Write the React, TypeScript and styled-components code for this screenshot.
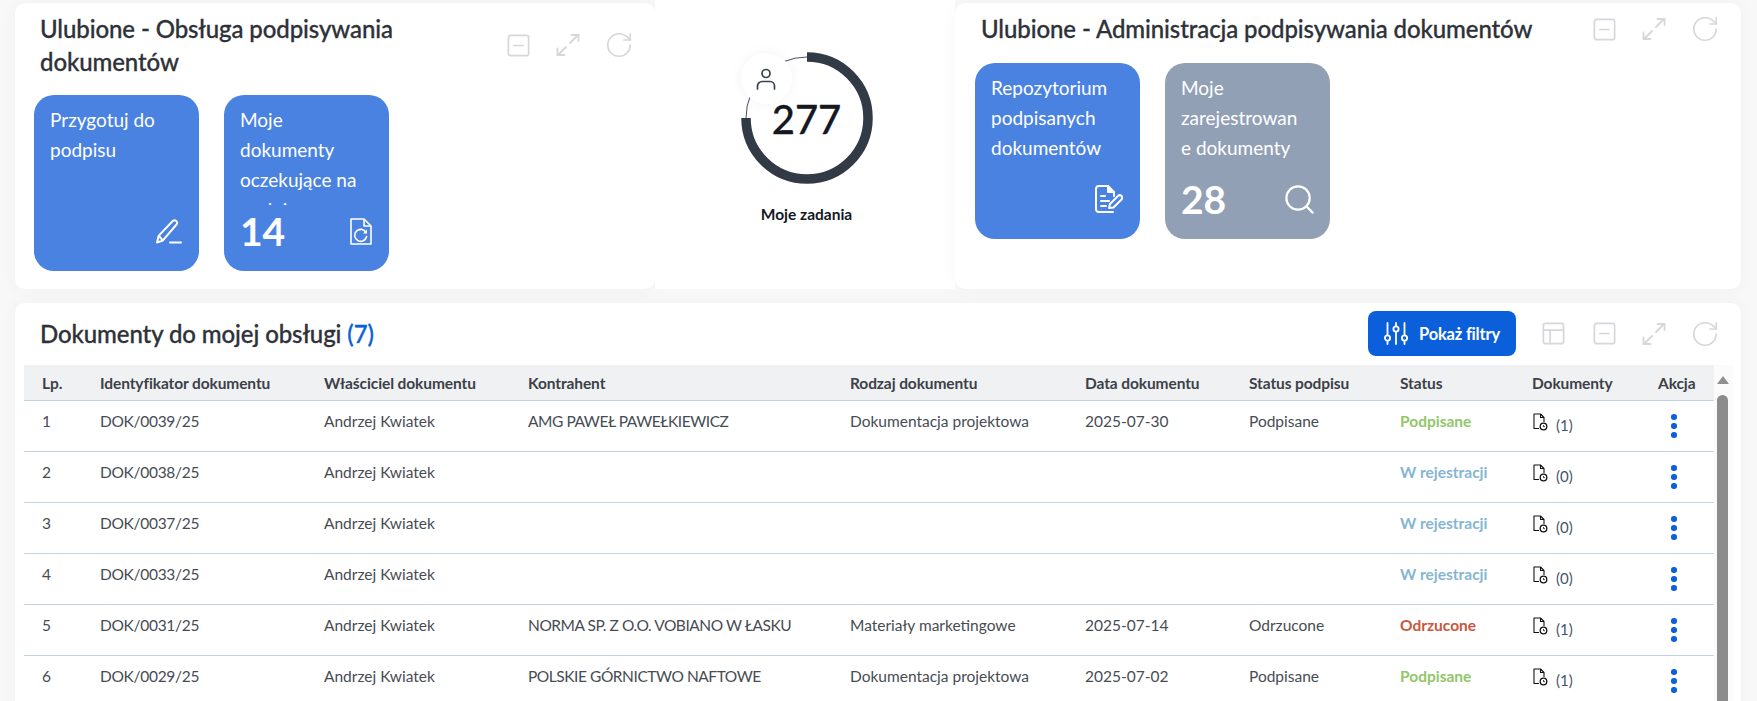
import React, { FunctionComponent } from 'react';
import styled, { createGlobalStyle } from 'styled-components';
import { RotateCw, SquareMinus, PanelsTopLeft, Search } from 'lucide-react';

const FONT = `Lato, "Noto Sans", Roboto, sans-serif`;

const GlobalStyle = createGlobalStyle`
  html, body {
    margin: 0;
    height: 100%;
    overflow: hidden;
    background: #f8f8f9;
    font-family: ${FONT};
  }
`;

const Page = styled.div`
  height: 701px;
  overflow: hidden;
  padding: 3px 16px 0 15px;
  box-sizing: border-box;
`;

const TopRow = styled.div`
  display: grid;
  grid-template-columns: 640px 300px 786px;
  height: 286px;
  margin-bottom: 14px;
`;

const Card = styled.section`
  background: #fff;
  border-radius: 10px;
  box-shadow: 0 0 18px rgba(0, 0, 0, 0.035);
  padding: 9px 25px 0 25px;
  box-sizing: border-box;
`;

const CardHead = styled.div`
  display: flex;
  justify-content: space-between;
  align-items: flex-start;
`;

const Title = styled.h2`
  margin: 0;
  font-size: 24px;
  line-height: 33px;
  font-weight: 500;
  color: #2e3238;
  letter-spacing: -0.1px;
  -webkit-text-stroke: 0.3px #2e3238;
  width: 440px;
`;

const WideTitle = styled(Title)`
  width: auto;
  margin-left: 1px;
`;

const Actions = styled.div<{ $top: number }>`
  display: flex;
  align-items: center;
  gap: 24px;
  padding-top: ${(props) => props.$top}px;
  margin-right: -4px;
  color: #d5d7db;
`;

const Tiles = styled.div<{ $left: number; $top: number }>`
  display: flex;
  gap: 25px;
  margin: ${(props) => props.$top}px 0 0 ${(props) => props.$left}px;
`;

const Tile = styled.div<{ $grey?: boolean }>`
  width: 165px;
  height: 176px;
  border-radius: 20px;
  background: ${(props) => (props.$grey ? '#92a0b6' : '#4a82e2')};
  color: #fff;
  padding: 10px 17px 14px 16px;
  box-sizing: border-box;
  display: flex;
  flex-direction: column;
`;

const TileText = styled.div`
  height: 100px;
  width: 122px;
  overflow: hidden;
  font-size: 19px;
  line-height: 30px;
  font-weight: 400;
  overflow-wrap: anywhere;
`;

const TileFoot = styled.div`
  flex: 1;
  display: flex;
  align-items: center;
  justify-content: space-between;
`;

const TileCount = styled.span`
  font-size: 39px;
  font-weight: 700;
  line-height: 1;
`;

const TileIcon = styled.span`
  margin-left: auto;
  display: flex;
`;

const SearchIcon = styled(Search)`
  margin-right: -4px;
`;

const RingPanel = styled.div`
  background: #fff;
  margin-top: -3px;
  height: 289px;
  display: flex;
  flex-direction: column;
  align-items: center;
  padding: 52px 0 0 3px;
  box-sizing: border-box;
`;

const Ring = styled.div`
  position: relative;
  width: 132px;
  height: 132px;
  display: flex;
  align-items: center;
  justify-content: center;
`;

const RingSvg = styled.svg`
  position: absolute;
  inset: 0;
`;

const RingValue = styled.span`
  position: relative;
  font-size: 40px;
  font-weight: 500;
  color: #14181f;
  -webkit-text-stroke: 0.3px #14181f;
  top: 1px;
`;

const RingBadge = styled.span`
  position: absolute;
  left: 0;
  top: 1px;
  width: 51px;
  height: 51px;
  border-radius: 50%;
  background: #fff;
  box-shadow: 0 0 14px rgba(0, 0, 0, 0.05);
  display: flex;
  align-items: center;
  justify-content: center;
  color: #3a4250;
`;

const RingLabel = styled.div`
  margin-top: 21px;
  font-size: 15.5px;
  font-weight: 700;
  color: #14181f;
`;

const TableCard = styled.section`
  background: #fff;
  border-radius: 10px 10px 0 0;
  box-shadow: 0 0 18px rgba(0, 0, 0, 0.035);
  padding: 8px 0 0 9px;
  height: 420px;
  box-sizing: border-box;
`;

const TableHead = styled.div`
  display: flex;
  align-items: center;
  height: 45px;
  padding: 0 25px 0 16px;
  margin-bottom: 9px;
`;

const TableTitle = styled.h2`
  margin: 0;
  flex: 1;
  font-size: 24px;
  font-weight: 500;
  color: #2e3238;
  letter-spacing: -0.1px;
  -webkit-text-stroke: 0.3px #2e3238;
`;

const TitleCount = styled.span`
  color: #0b60d8;
  -webkit-text-stroke: 0.3px #0b60d8;
`;

const FilterButton = styled.button`
  width: 148px;
  height: 45px;
  border: 0;
  border-radius: 8px;
  background: #0b5fdb;
  color: #fff;
  font-family: ${FONT};
  font-size: 16.5px;
  font-weight: 700;
  letter-spacing: -0.2px;
  display: flex;
  align-items: center;
  gap: 11px;
  padding: 0 0 0 16px;
  margin-right: 24px;
`;

const TableBody = styled.div`
  display: flex;
  align-items: flex-start;
`;

const Grid = styled.table`
  width: 1690px;
  table-layout: fixed;
  border-collapse: separate;
  border-spacing: 0;
  flex: none;
`;

const Th = styled.th<{ $w: number }>`
  width: ${(props) => props.$w}px;
  height: 36px;
  padding: 0 0 0 18px;
  box-sizing: border-box;
  background: #f0f1f3;
  border-bottom: 1px solid #c3d1e4;
  text-align: left;
  font-size: 15.5px;
  font-weight: 700;
  color: #3c4149;
  letter-spacing: -0.1px;
  white-space: nowrap;
`;

const Td = styled.td`
  height: 51px;
  padding: 9px 0 0 18px;
  box-sizing: border-box;
  vertical-align: top;
  border-bottom: 1px solid #c3d1e4;
  font-size: 15.5px;
  line-height: 22px;
  color: #474c54;
  white-space: nowrap;
`;

const IdCell = styled(Td)`
  letter-spacing: -0.3px;
`;

const FirmCell = styled(Td)`
  letter-spacing: -0.45px;
`;

const STATUS_COLORS: Record<string, string> = {
  Podpisane: '#93c66b',
  'W rejestracji': '#85b6d1',
  Odrzucone: '#c9573c',
};

const StatusText = styled.span<{ $status: string }>`
  font-weight: 700;
  color: ${(props) => STATUS_COLORS[props.$status]};
`;

const DocCell = styled.div`
  display: flex;
  align-items: flex-start;
  gap: 8px;
  padding: 3px 0 0 1px;
`;

const DocCount = styled.span`
  font-size: 15px;
  line-height: 18px;
  margin-top: 3px;
  color: #47556a;
`;

const Kebab = styled.div`
  display: flex;
  flex-direction: column;
  gap: 3.5px;
  width: 6px;
  margin: 4px 0 0 13px;
`;

const KebabDot = styled.span`
  width: 5.5px;
  height: 5.5px;
  border-radius: 50%;
  background: #0b60dc;
`;

const ScrollTrack = styled.div`
  flex: none;
  width: 19px;
  padding-left: 3px;
  box-sizing: border-box;
  background: #fbfbfb;
  display: flex;
  flex-direction: column;
`;

const ScrollArrow = styled.span`
  width: 0;
  height: 0;
  margin: 11px 0 11px 0;
  border-left: 6px solid transparent;
  border-right: 6px solid transparent;
  border-bottom: 8px solid #8f8f8f;
`;

const ScrollThumb = styled.div`
  width: 11px;
  height: 320px;
  border-radius: 6px 6px 0 0;
  background: #8c8c8c;
`;

const ExpandIcon: FunctionComponent = () => (
  <svg width="24" height="22" viewBox="0 0 24 22" fill="none" stroke="currentColor" strokeWidth="1.8" strokeLinecap="round">
    <path d="M14 9l8-8M15.500 1H22.500V7" />
    <path d="M10 13l-8 8M1.500 14.500V21H8.500" />
  </svg>
);

const PenIcon: FunctionComponent = () => (
  <svg width="26" height="25" viewBox="0 0 26 25" fill="none" stroke="#fff" strokeWidth="2" strokeLinejoin="round" strokeLinecap="round">
    <path d="M1 23.500l1.600-6.600L16.500 2.200c1-1 2.600-1.200 3.700-.3s1.200 2.600.3 3.600L6.700 21.600 1 23.500z" />
    <path d="M3 17l3.500 4.200" />
    <path d="M14 23.500h11" />
  </svg>
);

const RefreshDocIcon: FunctionComponent = () => (
  <svg width="22" height="27" viewBox="0 0 22 27" fill="none" stroke="#fff" strokeWidth="1.6" strokeLinejoin="round">
    <path d="M1 1h13l7 7v18H1z" />
    <path d="M14 1v7h7" />
    <path d="M16 14.500a6 6 0 1 0 .6 4" strokeLinecap="round" />
    <path d="M17 11.500v4h-4" fill="#fff" stroke="none" />
  </svg>
);

const EditDocIcon: FunctionComponent = () => (
  <svg width="28" height="28" viewBox="0 0 28 28" fill="none" stroke="#fff" strokeWidth="2" strokeLinecap="round" strokeLinejoin="round">
    <path d="M19 11V7l-6-6H4a3 3 0 0 0-3 3v20a3 3 0 0 0 3 3h14" />
    <path d="M13 1v6h6" fill="#fff" />
    <path d="M6 11h4M6 16h8M6 21h5" />
    <path d="M14 23l1-4 8-8c1-1 2.500-1 3.500 0s1 2.500 0 3.500l-8 8z" />
  </svg>
);

const SlidersIcon: FunctionComponent = () => (
  <svg width="24" height="23" viewBox="0 0 24 23" fill="none" stroke="#fff" strokeWidth="1.8" strokeLinecap="round">
    <path d="M3.500 1v12M3.500 19v3" />
    <circle cx="3.500" cy="16" r="2.600" />
    <path d="M12 1v3M12 10v12" />
    <circle cx="12" cy="7" r="2.600" />
    <path d="M20.500 1v12M20.500 19v3" />
    <circle cx="20.500" cy="16" r="2.600" />
  </svg>
);

const UserIcon: FunctionComponent = () => (
  <svg width="20" height="22" viewBox="0 0 20 22" fill="none" stroke="currentColor" strokeWidth="1.7" strokeLinecap="round">
    <circle cx="10" cy="5.500" r="4" />
    <path d="M1.500 21v-3a4.500 4.500 0 0 1 4.500-4.500h8a4.500 4.500 0 0 1 4.500 4.500v3" />
  </svg>
);

const FileClockIcon: FunctionComponent = () => (
  <svg width="15" height="18" viewBox="0 0 15 18" fill="none" stroke="#111" strokeWidth="1.1" strokeLinejoin="round">
    <path d="M6 15.500H1V1h6.500L11 4.500V9" />
    <path d="M7.500 1v3.500H11" />
    <circle cx="10.500" cy="13.500" r="3.300" strokeWidth="1.300" />
    <path d="M10.500 12v1.700h1.500" strokeWidth="0.8" />
  </svg>
);

const CardActions: FunctionComponent<{ top: number }> = ({ top }) => (
  <Actions $top={top}>
    <SquareMinus size={27} strokeWidth={1.5} />
    <ExpandIcon />
    <RotateCw size={30} strokeWidth={1.3} />
  </Actions>
);

const COLUMNS: [string, number][] = [
  ['Lp.', 58],
  ['Identyfikator dokumentu', 224],
  ['Właściciel dokumentu', 204],
  ['Kontrahent', 322],
  ['Rodzaj dokumentu', 235],
  ['Data dokumentu', 164],
  ['Status podpisu', 151],
  ['Status', 132],
  ['Dokumenty', 126],
  ['Akcja', 74],
];

const ROWS = [
  { id: 'DOK/0039/25', firm: 'AMG PAWEŁ PAWEŁKIEWICZ', kind: 'Dokumentacja projektowa', date: '2025-07-30', sign: 'Podpisane', status: 'Podpisane', docs: 1 },
  { id: 'DOK/0038/25', firm: '', kind: '', date: '', sign: '', status: 'W rejestracji', docs: 0 },
  { id: 'DOK/0037/25', firm: '', kind: '', date: '', sign: '', status: 'W rejestracji', docs: 0 },
  { id: 'DOK/0033/25', firm: '', kind: '', date: '', sign: '', status: 'W rejestracji', docs: 0 },
  { id: 'DOK/0031/25', firm: 'NORMA SP. Z O.O. VOBIANO W ŁASKU', kind: 'Materiały marketingowe', date: '2025-07-14', sign: 'Odrzucone', status: 'Odrzucone', docs: 1 },
  { id: 'DOK/0029/25', firm: 'POLSKIE GÓRNICTWO NAFTOWE', kind: 'Dokumentacja projektowa', date: '2025-07-02', sign: 'Podpisane', status: 'Podpisane', docs: 1 },
];

export default function App() {
  return (
    <Page>
      <GlobalStyle />
      <TopRow>
        <Card>
          <CardHead>
            <Title>Ulubione - Obsługa podpisywania dokumentów</Title>
            <CardActions top={18} />
          </CardHead>
          <Tiles $left={-6} $top={17}>
            <Tile>
              <TileText>Przygotuj do podpisu</TileText>
              <TileFoot>
                <TileIcon>
                  <PenIcon />
                </TileIcon>
              </TileFoot>
            </Tile>
            <Tile>
              <TileText>Moje dokumenty oczekujące na podpis</TileText>
              <TileFoot>
                <TileCount>14</TileCount>
                <RefreshDocIcon />
              </TileFoot>
            </Tile>
          </Tiles>
        </Card>

        <RingPanel>
          <Ring>
            <RingSvg width="132" height="132" viewBox="0 0 132 132" fill="none">
              <circle cx="66" cy="66" r="61" stroke="#4a525d" strokeWidth="1" />
              <circle
                cx="66"
                cy="66"
                r="61"
                stroke="#323a45"
                strokeWidth="9.5"
                pathLength={100}
                strokeDasharray="75 25"
                transform="rotate(-90 66 66)"
              />
            </RingSvg>
            <RingValue>277</RingValue>
            <RingBadge>
              <UserIcon />
            </RingBadge>
          </Ring>
          <RingLabel>Moje zadania</RingLabel>
        </RingPanel>

        <Card>
          <CardHead>
            <WideTitle>Ulubione - Administracja podpisywania dokumentów</WideTitle>
            <CardActions top={2} />
          </CardHead>
          <Tiles $left={-5} $top={18}>
            <Tile>
              <TileText>Repozytorium podpisanych dokumentów</TileText>
              <TileFoot>
                <TileIcon>
                  <EditDocIcon />
                </TileIcon>
              </TileFoot>
            </Tile>
            <Tile $grey>
              <TileText>Moje zarejestrowane dokumenty</TileText>
              <TileFoot>
                <TileCount>28</TileCount>
                <SearchIcon size={35} strokeWidth={1.5} color="#fff" />
              </TileFoot>
            </Tile>
          </Tiles>
        </Card>
      </TopRow>

      <TableCard>
        <TableHead>
          <TableTitle>
            Dokumenty do mojej obsługi <TitleCount>(7)</TitleCount>
          </TableTitle>
          <FilterButton>
            <SlidersIcon />
            Pokaż filtry
          </FilterButton>
          <Actions $top={0}>
            <PanelsTopLeft size={27} strokeWidth={1.5} />
            <SquareMinus size={27} strokeWidth={1.5} />
            <ExpandIcon />
            <RotateCw size={30} strokeWidth={1.3} />
          </Actions>
        </TableHead>
        <TableBody>
          <Grid>
            <thead>
              <tr>
                {COLUMNS.map(([label, width]) => (
                  <Th key={label} $w={width}>
                    {label}
                  </Th>
                ))}
              </tr>
            </thead>
            <tbody>
              {ROWS.map((row, index) => (
                <tr key={row.id}>
                  <Td>{index + 1}</Td>
                  <IdCell>{row.id}</IdCell>
                  <Td>Andrzej Kwiatek</Td>
                  <FirmCell>{row.firm}</FirmCell>
                  <Td>{row.kind}</Td>
                  <Td>{row.date}</Td>
                  <Td>{row.sign}</Td>
                  <Td>
                    <StatusText $status={row.status}>{row.status}</StatusText>
                  </Td>
                  <Td>
                    <DocCell>
                      <FileClockIcon />
                      <DocCount>({row.docs})</DocCount>
                    </DocCell>
                  </Td>
                  <Td>
                    <Kebab>
                      <KebabDot />
                      <KebabDot />
                      <KebabDot />
                    </Kebab>
                  </Td>
                </tr>
              ))}
            </tbody>
          </Grid>
          <ScrollTrack>
            <ScrollArrow />
            <ScrollThumb />
          </ScrollTrack>
        </TableBody>
      </TableCard>
    </Page>
  );
}
